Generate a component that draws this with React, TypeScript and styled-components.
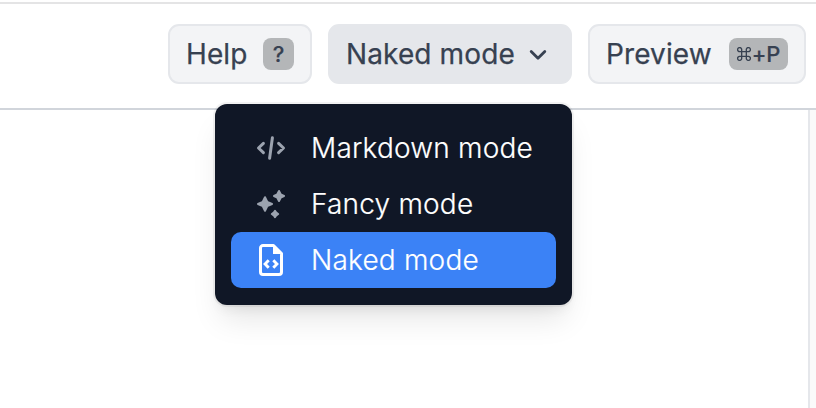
import React from "react";
import styled, { createGlobalStyle } from "styled-components";

const GlobalStyle = createGlobalStyle`
  * { box-sizing: border-box; }
  body {
    margin: 0;
    overflow: hidden;
    background: #fff;
    font-family: Inter, "Liberation Sans", sans-serif;
  }
`;

const Page = styled.div`
  width: 816px;
  height: 408px;
  overflow: hidden;
  display: flex;
  flex-direction: column;
  padding-top: 2px;
`;

const Header = styled.header`
  flex: none;
  height: 108px;
  padding: 20px 10px 0 0;
  border-top: 2px solid #e4e4e5;
  border-bottom: 2px solid #d1d5db;
  display: flex;
  justify-content: flex-end;
  align-items: flex-start;
  gap: 16px;
`;

const Button = styled.button<{ $width: number; $active?: boolean }>`
  width: ${(p) => p.$width}px;
  height: 60px;
  padding: 0 16px;
  display: flex;
  align-items: center;
  justify-content: space-between;
  border: 2px solid #e5e7eb;
  border-radius: 11px;
  background: ${(p) => (p.$active ? "#e5e7eb" : "#f3f4f6")};
  color: #374151;
  font: 400 28px/40px Inter, sans-serif;
  white-space: nowrap;
`;

const Label = styled.span`
  letter-spacing: 0.12px;
  -webkit-text-stroke: 0.25px currentColor;
`;

const Kbd = styled.kbd<{ $width: number }>`
  flex: none;
  width: ${(p) => p.$width}px;
  height: 32px;
  display: flex;
  align-items: center;
  justify-content: center;
  border-radius: 8px;
  background: #b4b6b8;
  font: 500 22px/32px Inter, sans-serif;
  letter-spacing: -0.2px;
  -webkit-text-stroke: 0.2px currentColor;
`;

const CommandIcon = styled.svg`
  width: 14px;
  height: 14px;
  margin-right: 1px;
`;

const Chevron = styled.svg`
  width: 32px;
  height: 32px;
`;

const MenuAnchor = styled.div`
  position: relative;
`;

const Menu = styled.div`
  position: absolute;
  top: 80px;
  right: 0;
  z-index: 2;
  width: 357px;
  height: 201px;
  padding: 16px;
  border-radius: 12px;
  background: #101726;
  box-shadow: 0 0 0 2px rgba(0, 0, 0, 0.05), 0 20px 30px -6px rgba(0, 0, 0, 0.1),
    0 8px 12px -4px rgba(0, 0, 0, 0.06);
`;

const MenuItem = styled.div<{ $selected?: boolean }>`
  height: 56px;
  padding-left: 24px;
  display: flex;
  align-items: center;
  gap: 24px;
  border-radius: 10px;
  background: ${(p) => (p.$selected ? "#3b82f6" : "transparent")};
  color: ${(p) => (p.$selected ? "#fff" : "#9ca3af")};
`;

const MenuText = styled.span`
  color: #fff;
  font: 300 28px/40px Inter, sans-serif;
  letter-spacing: 0.2px;
  -webkit-text-stroke: 0.2px currentColor;
  white-space: nowrap;
`;

const ItemIcon = styled.svg`
  flex: none;
  width: 32px;
  height: 32px;
`;

const Body = styled.main`
  flex: 1;
  display: flex;
`;

const Editor = styled.section`
  flex: 1;
`;

const SidePanel = styled.aside`
  width: 8px;
  border-left: 2px solid #e5e7eb;
  background: #fafafa;
`;

const CodeIcon = () => (
  <ItemIcon viewBox="0 0 32 32" fill="none" stroke="currentColor" strokeWidth="3" strokeLinecap="round" strokeLinejoin="round">
    <path d="M8.4 11.3 3.5 16l4.9 4.7M23.6 11.3l4.9 4.7-4.9 4.7M17.4 5.7 14.6 26.3" />
  </ItemIcon>
);

const SparklesIcon = () => (
  <ItemIcon viewBox="0 0 32 32" fill="currentColor" stroke="currentColor" strokeWidth="2" strokeLinejoin="round">
    <path d="M10 9.2 12.2 13.8 17 16l-4.8 2.2L10 22.8l-2.2-4.6L3 16l4.8-2.2Z" />
    <path d="m24 3 1.7 3.3L29 8l-3.3 1.7L24 13l-1.7-3.3L19 8l3.3-1.7Z" />
    <path d="m20 22.8 1.3 1.9 1.9 1.3-1.9 1.3-1.3 1.9-1.3-1.9-1.9-1.3 1.9-1.3Z" />
  </ItemIcon>
);

const FileCodeIcon = () => (
  <ItemIcon viewBox="0 0 32 32" fill="none" stroke="currentColor" strokeWidth="3">
    <path d="M18.5 1.5H8A2.5 2.5 0 0 0 5.5 4v24A2.5 2.5 0 0 0 8 30.5h16a2.5 2.5 0 0 0 2.5-2.5V9.5Z" strokeLinejoin="round" />
    <path d="M18 1v9h9Z" fill="currentColor" stroke="none" />
    <path d="m13.7 16.3-3.6 3.7 3.6 3.7M18.3 16.3l3.6 3.7-3.6 3.7" strokeWidth="2.9" />
  </ItemIcon>
);

const items = [
  { label: "Markdown mode", Icon: CodeIcon },
  { label: "Fancy mode", Icon: SparklesIcon },
  { label: "Naked mode", Icon: FileCodeIcon },
];

export default function App() {
  return (
    <Page>
      <GlobalStyle />
      <Header>
        <Button $width={144}>
          <Label>Help</Label>
          <Kbd $width={31}>?</Kbd>
        </Button>
        <MenuAnchor>
          <Button $width={244} $active>
            <Label>Naked mode</Label>
            <Chevron viewBox="0 0 32 32" fill="none" stroke="currentColor" strokeWidth="2.8" strokeLinecap="round" strokeLinejoin="round">
              <path d="m9.2 13.4 6.8 6.8 6.8-6.8" />
            </Chevron>
          </Button>
          <Menu>
            {items.map(({ label, Icon }) => (
              <MenuItem key={label} $selected={label === "Naked mode"}>
                <Icon />
                <MenuText>{label}</MenuText>
              </MenuItem>
            ))}
          </Menu>
        </MenuAnchor>
        <Button $width={218}>
          <Label>Preview</Label>
          <Kbd $width={59}>
            <CommandIcon viewBox="0 0 24 24" fill="none" stroke="currentColor" strokeWidth="2.3">
              <path d="M8 8V5a3.5 3.5 0 1 0-3.5 3H19.5A3.5 3.5 0 1 0 16 5v14a3.5 3.5 0 1 0 3.5-3H4.5A3.5 3.5 0 1 0 8 19Z" />
            </CommandIcon>
            +P
          </Kbd>
        </Button>
      </Header>
      <Body>
        <Editor />
        <SidePanel />
      </Body>
    </Page>
  );
}
